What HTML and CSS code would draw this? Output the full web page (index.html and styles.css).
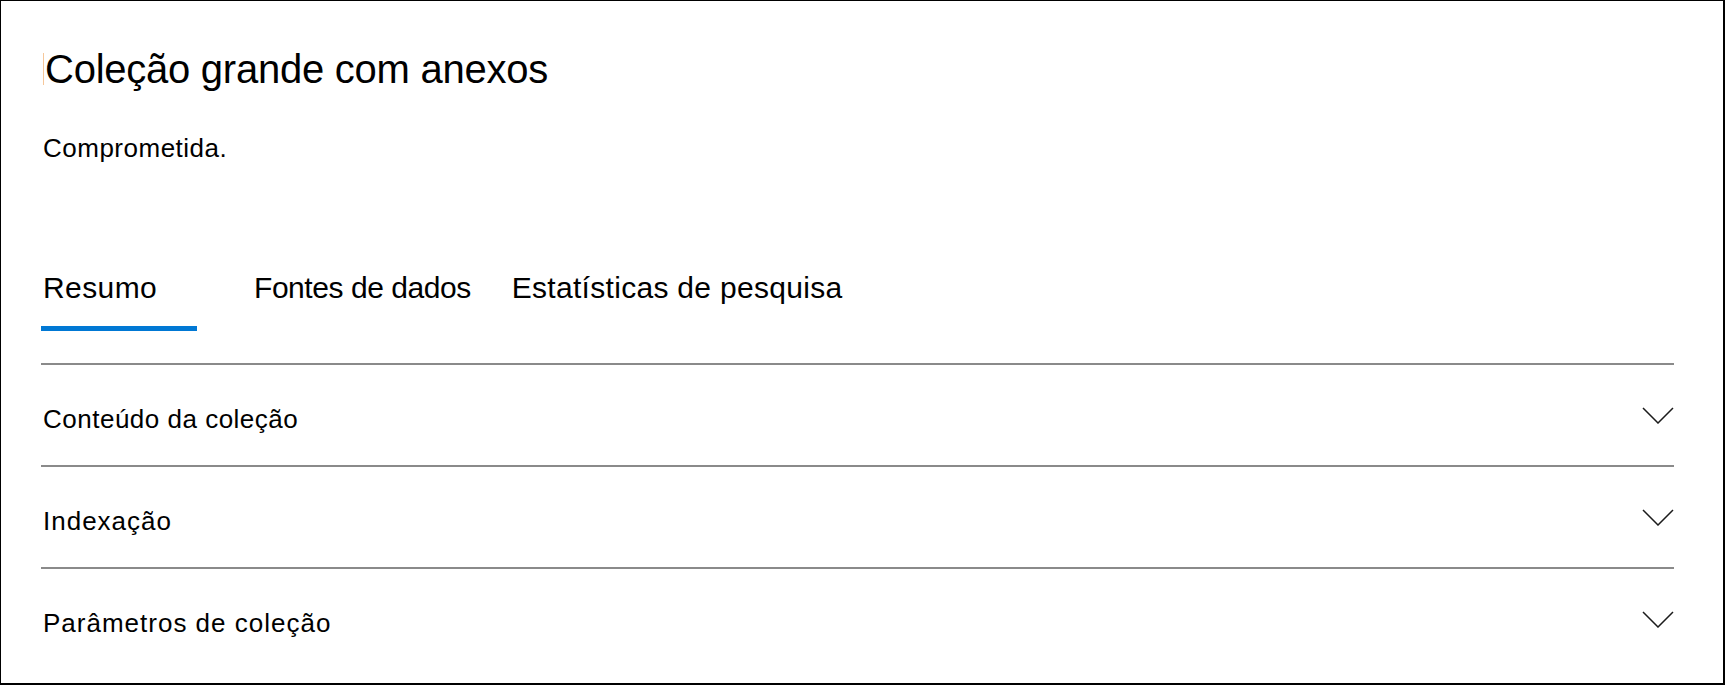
FILE: index.html
```html
<!DOCTYPE html>
<html lang="pt">
<head>
<meta charset="utf-8">
<title>Coleção grande com anexos</title>
<link rel="stylesheet" href="styles.css">
</head>
<body>
<div class="panel">
  <h1 class="title"><span class="caret"></span>Coleção grande com anexos</h1>
  <p class="status">Comprometida.</p>
  <nav class="tabs">
    <div class="tab tab-active">Resumo</div>
    <div class="tab tab-sources">Fontes de dados</div>
    <div class="tab tab-stats">Estatísticas de pesquisa</div>
  </nav>
  <div class="sections">
    <div class="row">
      <span class="row-label">Conteúdo da coleção</span>
      <svg class="chevron" width="32" height="17" viewBox="0 0 32 17"><polyline points="1,1 16,16 31,1" fill="none" stroke="#1b1b1b" stroke-width="1.5"/></svg>
    </div>
    <div class="row">
      <span class="row-label row-label-wide">Indexação</span>
      <svg class="chevron" width="32" height="17" viewBox="0 0 32 17"><polyline points="1,1 16,16 31,1" fill="none" stroke="#1b1b1b" stroke-width="1.5"/></svg>
    </div>
    <div class="row">
      <span class="row-label row-label-wide">Parâmetros de coleção</span>
      <svg class="chevron" width="32" height="17" viewBox="0 0 32 17"><polyline points="1,1 16,16 31,1" fill="none" stroke="#1b1b1b" stroke-width="1.5"/></svg>
    </div>
  </div>
</div>
</body>
</html>
```
FILE: styles.css
```css
html, body {
  margin: 0;
  padding: 0;
  background: #ffffff;
}

.panel {
  box-sizing: border-box;
  width: 1725px;
  height: 685px;
  border-style: solid;
  border-color: #000;
  border-width: 1px 2px 2px 1px;
  padding: 48px 49px 0 40px;
  font-family: "Liberation Sans", Arial, sans-serif;
  color: #000;
  overflow: hidden;
}

.title {
  margin: 0 0 0 2px;
  font-size: 40px;
  font-weight: normal;
  line-height: 40px;
  letter-spacing: -0.25px;
  display: flex;
  align-items: center;
}

.caret {
  display: inline-block;
  width: 1px;
  height: 32px;
  background: #f6c79a;
  margin-right: 1px;
}

.status {
  margin: 47px 0 0 2px;
  font-size: 26px;
  line-height: 25px;
  letter-spacing: 0.5px;
}

.tabs {
  display: flex;
  margin-top: 112px;
}

.tab {
  box-sizing: border-box;
  padding: 0 2px 23px;
  border-bottom: 5px solid transparent;
  font-size: 30px;
  line-height: 30px;
  white-space: nowrap;
}

.tab-active {
  width: 156px;
  margin-right: 55px;
  border-bottom-color: #0078d4;
  letter-spacing: 0.4px;
}

.tab-sources {
  margin-right: 37px;
  letter-spacing: -0.45px;
}

.tab-stats {
  letter-spacing: 0.3px;
}

.sections {
  margin-top: 32px;
}

.row {
  display: flex;
  align-items: center;
  justify-content: space-between;
  height: 100px;
  border-top: 2px solid #8a8a8a;
}

.row-label {
  margin: 8px 0 0 2px;
  font-size: 26px;
  line-height: 25px;
  letter-spacing: 0.5px;
}

.row-label-wide {
  letter-spacing: 1px;
}

.chevron {
  display: block;
}
```
